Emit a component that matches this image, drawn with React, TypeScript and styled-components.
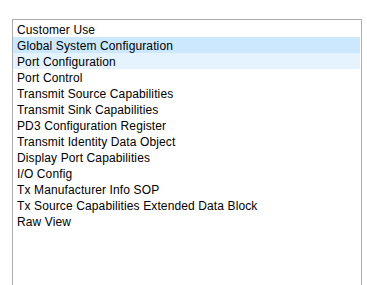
import React from "react";
import styled, { createGlobalStyle } from "styled-components";

const GlobalStyle = createGlobalStyle`
  html, body {
    margin: 0;
    padding: 0;
    background: #ffffff;
  }
  body {
    font-family: "Liberation Sans", Arial, sans-serif;
  }
`;

type RowState = "selected" | "hover" | "none";

const items: { label: string; state: RowState }[] = [
  { label: "Customer Use", state: "none" },
  { label: "Global System Configuration", state: "selected" },
  { label: "Port Configuration", state: "hover" },
  { label: "Port Control", state: "none" },
  { label: "Transmit Source Capabilities", state: "none" },
  { label: "Transmit Sink Capabilities", state: "none" },
  { label: "PD3 Configuration Register", state: "none" },
  { label: "Transmit Identity Data Object", state: "none" },
  { label: "Display Port Capabilities", state: "none" },
  { label: "I/O Config", state: "none" },
  { label: "Tx Manufacturer Info SOP", state: "none" },
  { label: "Tx Source Capabilities Extended Data Block", state: "none" },
  { label: "Raw View", state: "none" },
];

const App = () => {
  return (
    <>
      <GlobalStyle />
      <StPage>
        <StList>
          {items.map((item) => (
            <StRow key={item.label} $state={item.state}>
              {item.label}
            </StRow>
          ))}
        </StList>
      </StPage>
    </>
  );
};

export default App;

const StPage = styled.div`
  width: 367px;
  height: 285px;
  overflow: hidden;
  padding: 19px 0 0 12px;
  box-sizing: border-box;
`;

const StList = styled.div`
  width: 350px;
  height: 300px;
  box-sizing: border-box;
  border: 1px solid #acacac;
  padding: 1px 1px 1px 0;
  display: flex;
  flex-direction: column;
`;

const rowBg: Record<RowState, string> = {
  selected: "#cce8ff",
  hover: "#e5f3ff",
  none: "transparent",
};

const StRow = styled.div<{ $state: RowState }>`
  height: 16px;
  box-sizing: border-box;
  padding: 1px 0 0 4px;
  line-height: 16px;
  font-size: 12px;
  letter-spacing: 0.12px;
  color: #000000;
  white-space: nowrap;
  background: ${({ $state }) => rowBg[$state]};
`;
